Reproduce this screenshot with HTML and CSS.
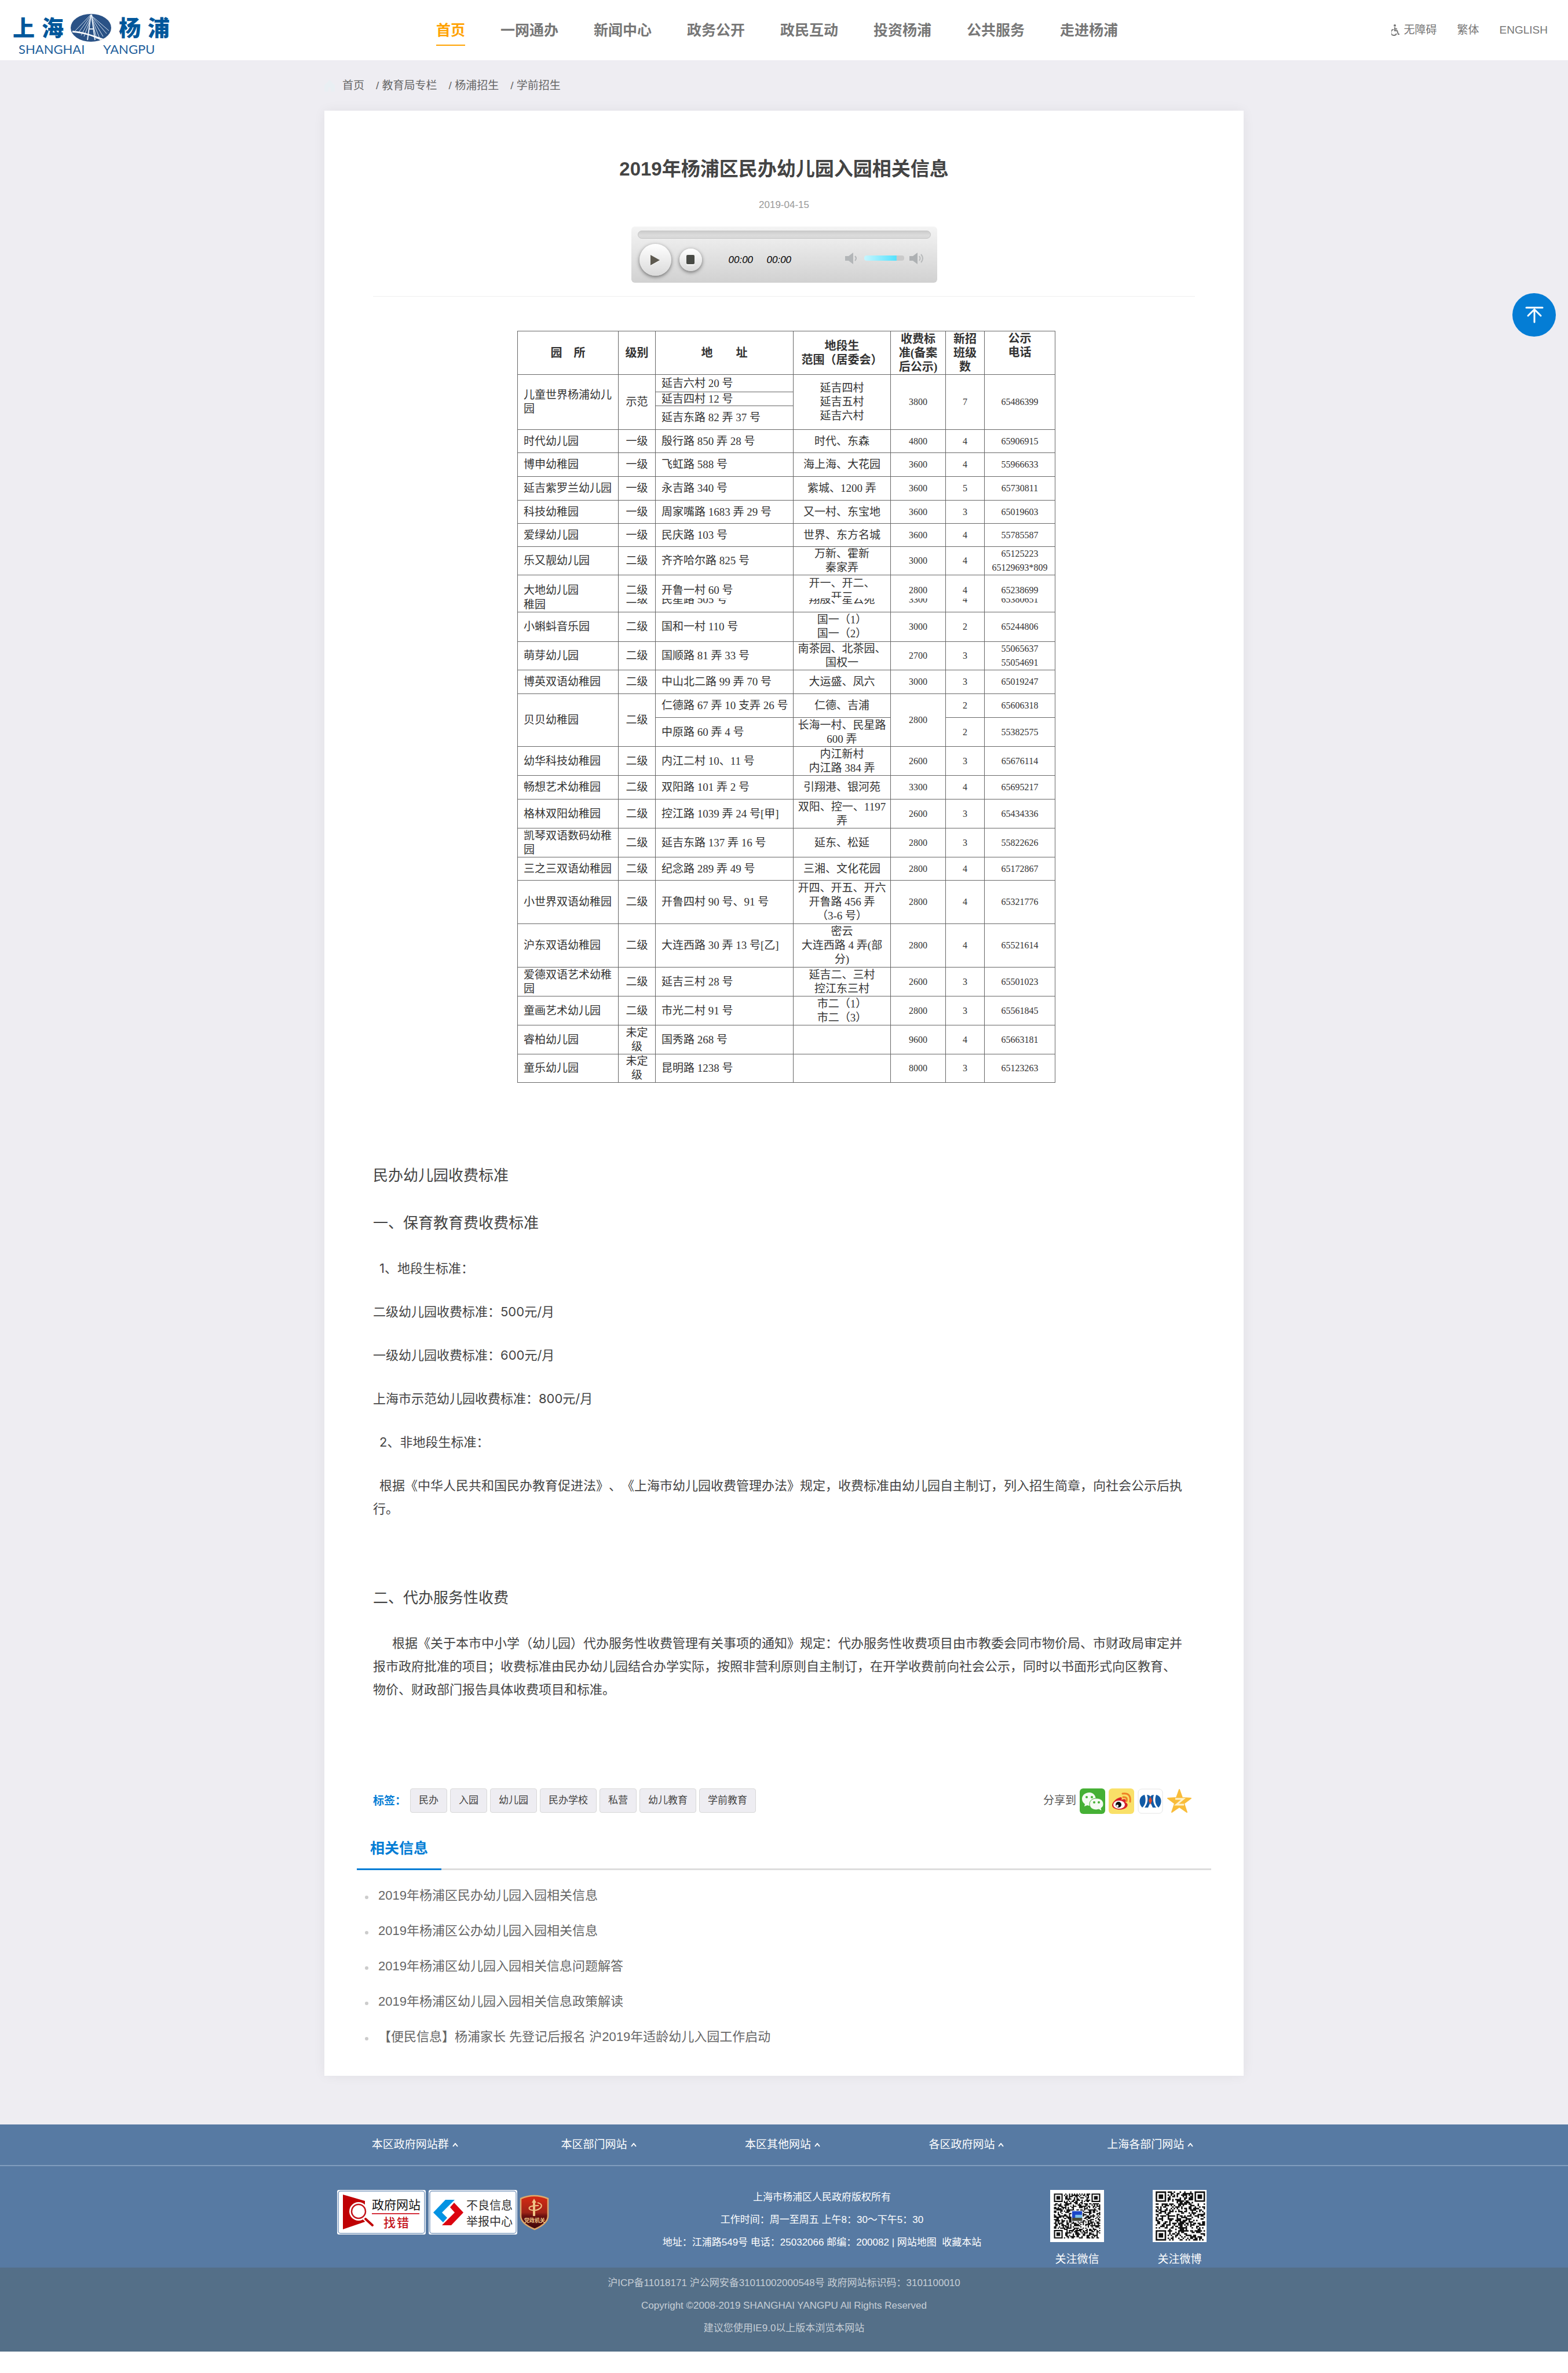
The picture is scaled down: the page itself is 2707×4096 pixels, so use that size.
FILE: index.html
```html
<!DOCTYPE html>
<html lang="zh-CN">
<head>
<meta charset="utf-8">
<meta name="viewport" content="width=device-width, initial-scale=1">
<title>2019年杨浦区民办幼儿园入园相关信息</title>
<link rel="stylesheet" href="styles.css">
</head>
<body>
<header class="site-header">
  <a class="logo" href="#" aria-label="上海杨浦">
    <svg width="276" height="76" viewBox="0 0 276 76">
      <g class="logo-name">
        <text x="0" y="39">上</text><text x="50" y="39">海</text><text x="183" y="39">杨</text><text x="233" y="39">浦</text>
      </g>
      <ellipse cx="135" cy="25" rx="35" ry="24" fill="#2a5286"/>
      <g stroke="#dfe9f4" stroke-width="1" fill="none">
        <path d="M134 3L108 30M134 5L113 34M135 6L118 38M135 8L123 40M137 5L166 30M137 6L162 35M137 8L156 40M137 10L150 43M137 12L145 44"/>
        <path d="M135 2L129 46M136 2L142 46M132 27H140" stroke-width="2"/>
      </g>
      <path d="M103 30C120 31 140 38 157 44L151 46C138 39 120 34 103 33Z" fill="#fff"/>
      <g class="logo-sub"><text x="10" y="70">SHANGHAI</text><text x="156" y="70">YANGPU</text></g>
    </svg>
  </a>
  <nav class="main-nav">
    <a class="active" href="#">首页</a><a href="#">一网通办</a><a href="#">新闻中心</a><a href="#">政务公开</a><a href="#">政民互动</a><a href="#">投资杨浦</a><a href="#">公共服务</a><a href="#">走进杨浦</a>
  </nav>
  <div class="tools">
    <a href="#"><svg width="14" height="20" viewBox="0 0 14 20" fill="none" stroke="#777" stroke-width="2"><circle cx="6" cy="2" r="2" fill="#777" stroke="none"/><path d="M6 5V11H10L12 17H14M6 8H10M4 9A5 5 0 1 0 9 16"/></svg>无障碍</a>
    <a href="#">繁体</a>
    <a href="#">ENGLISH</a>
  </div>
</header>

<main class="page">
  <nav class="crumbs">
    <svg width="18" height="20" viewBox="0 0 18 20" fill="#e9eff3"><path d="M9 0L18 9V20H11V13H7V20H0V9Z"/></svg>
    <a href="#">首页</a><span>/ <a href="#">教育局专栏</a></span><span>/ <a href="#">杨浦招生</a></span><span>/ <a href="#">学前招生</a></span>
  </nav>

  <article class="card">
    <h1>2019年杨浦区民办幼儿园入园相关信息</h1>
    <p class="date">2019-04-15</p>
    <div class="player">
      <input class="seek" type="range" value="0" aria-label="播放进度">
      <div class="controls">
        <button class="play" type="button" aria-label="播放"><svg width="18" height="20" viewBox="0 0 18 20"><path d="M1 2L17 11L1 20Z" fill="#fff"/><path d="M1 1L17 10L1 19Z" fill="#5e5a50"/></svg></button>
        <button class="stop" type="button" aria-label="停止"><svg width="14" height="18" viewBox="0 0 14 18"><rect y="2" width="14" height="16" rx="2" fill="#f8f8f8"/><rect width="14" height="16" rx="2" fill="#484a45"/></svg></button>
        <span class="time">00:00</span><span class="time">00:00</span>
        <div class="volume">
          <svg width="24" height="20" viewBox="0 0 24 20"><path d="M0 6H6L14 0V20L6 14H0Z" fill="#b3b6b8"/><path d="M17 6Q21 10 17 14" fill="none" stroke="#b3b6b8" stroke-width="2"/></svg>
          <input class="level" type="range" value="80" aria-label="音量">
          <svg width="28" height="20" viewBox="0 0 28 20"><path d="M0 6H6L14 0V20L6 14H0Z" fill="#aeb1b3"/><path d="M17 6Q20 10 17 14M20 3Q26 10 20 17" fill="none" stroke="#b8babb" stroke-width="2"/></svg>
        </div>
      </div>
    </div>
    <hr>

    <table class="schools">
      <colgroup><col class="c1"><col class="c2"><col class="c3"><col class="c4"><col class="c5"><col class="c6"><col class="c7"></colgroup>
      <thead>
        <tr class="h75"><th>园&emsp;所</th><th>级别</th><th>地&emsp;&emsp;址</th><th>地段生<br>范围（居委会）</th><th>收费标<br>准(备案<br>后公示)</th><th>新招<br>班级<br>数</th><th class="top">公示<br>电话</th></tr>
      </thead>
      <tbody>
        <tr class="h30"><td rowspan="3">儿童世界杨浦幼儿园</td><td rowspan="3">示范</td><td>延吉六村 20 号</td><td rowspan="3">延吉四村<br>延吉五村<br>延吉六村</td><td rowspan="3">3800</td><td rowspan="3">7</td><td rowspan="3">65486399</td></tr>
        <tr class="h24"><td>延吉四村 12 号</td></tr>
        <tr class="h41"><td>延吉东路 82 弄 37 号</td></tr>
        <tr class="h40"><td>时代幼儿园</td><td>一级</td><td>殷行路 850 弄 28 号</td><td>时代、东森</td><td>4800</td><td>4</td><td>65906915</td></tr>
        <tr class="h41"><td>博申幼稚园</td><td>一级</td><td>飞虹路 588 号</td><td>海上海、大花园</td><td>3600</td><td>4</td><td>55966633</td></tr>
        <tr class="h41"><td>延吉紫罗兰幼儿园</td><td>一级</td><td>永吉路 340 号</td><td>紫城、1200 弄</td><td>3600</td><td>5</td><td>65730811</td></tr>
        <tr class="h40"><td>科技幼稚园</td><td>一级</td><td>周家嘴路 1683 弄 29 号</td><td>又一村、东宝地</td><td>3600</td><td>3</td><td>65019603</td></tr>
        <tr class="h40"><td>爱绿幼儿园</td><td>一级</td><td>民庆路 103 号</td><td>世界、东方名城</td><td>3600</td><td>4</td><td>55785587</td></tr>
        <tr class="h49"><td>乐又靓幼儿园</td><td>二级</td><td>齐齐哈尔路 825 号</td><td>万新、霍新<br>秦家弄</td><td>3000</td><td>4</td><td>65125223<br>65129693*809</td></tr>
        <tr class="h40 cut-above"><td><div>大地幼儿园</div></td><td><div>二级</div></td><td><div>开鲁一村 60 号</div></td><td><div class="two">开一、开二、<br>开三</div></td><td><div>2800</div></td><td><div>4</div></td><td><div>65238699</div></td></tr>
        <tr class="h24 cut-below"><td>稚园</td><td><div>二级</div></td><td><div>民星路 505 号</div></td><td><div>翔殷、星云苑</div></td><td><div>3300</div></td><td><div>4</div></td><td><div>65380651</div></td></tr>
        <tr class="h51"><td>小蝌蚪音乐园</td><td>二级</td><td>国和一村 110 号</td><td>国一（1）<br>国一（2）</td><td>3000</td><td>2</td><td>65244806</td></tr>
        <tr class="h49"><td>萌芽幼儿园</td><td>二级</td><td>国顺路 81 弄 33 号</td><td>南茶园、北茶园、<br>国权一</td><td>2700</td><td>3</td><td>55065637<br>55054691</td></tr>
        <tr class="h41"><td>博英双语幼稚园</td><td>二级</td><td>中山北二路 99 弄 70 号</td><td>大运盛、凤六</td><td>3000</td><td>3</td><td>65019247</td></tr>
        <tr class="h41"><td rowspan="2">贝贝幼稚园</td><td rowspan="2">二级</td><td>仁德路 67 弄 10 支弄 26 号</td><td>仁德、吉浦</td><td rowspan="2">2800</td><td>2</td><td>65606318</td></tr>
        <tr class="h50 branch"><td>中原路 60 弄 4 号</td><td>长海一村、民星路<br>600 弄</td><td>2</td><td>55382575</td></tr>
        <tr class="h50"><td>幼华科技幼稚园</td><td>二级</td><td>内江二村 10、11 号</td><td>内江新村<br>内江路 384 弄</td><td>2600</td><td>3</td><td>65676114</td></tr>
        <tr class="h41"><td>畅想艺术幼稚园</td><td>二级</td><td>双阳路 101 弄 2 号</td><td>引翔港、银河苑</td><td>3300</td><td>4</td><td>65695217</td></tr>
        <tr class="h50"><td>格林双阳幼稚园</td><td>二级</td><td>控江路 1039 弄 24 号[甲]</td><td>双阳、控一、1197<br>弄</td><td>2600</td><td>3</td><td>65434336</td></tr>
        <tr class="h50"><td>凯琴双语数码幼稚园</td><td>二级</td><td>延吉东路 137 弄 16 号</td><td>延东、松延</td><td>2800</td><td>3</td><td>55822626</td></tr>
        <tr class="h40"><td>三之三双语幼稚园</td><td>二级</td><td>纪念路 289 弄 49 号</td><td>三湘、文化花园</td><td>2800</td><td>4</td><td>65172867</td></tr>
        <tr class="h75"><td>小世界双语幼稚园</td><td>二级</td><td>开鲁四村 90 号、91 号</td><td>开四、开五、开六<br>开鲁路 456 弄<br>（3-6 号）</td><td>2800</td><td>4</td><td>65321776</td></tr>
        <tr class="h75"><td>沪东双语幼稚园</td><td>二级</td><td>大连西路 30 弄 13 号[乙]</td><td>密云<br>大连西路 4 弄(部<br>分)</td><td>2800</td><td>4</td><td>65521614</td></tr>
        <tr class="h50"><td>爱德双语艺术幼稚园</td><td>二级</td><td>延吉三村 28 号</td><td>延吉二、三村<br>控江东三村</td><td>2600</td><td>3</td><td>65501023</td></tr>
        <tr class="h50"><td>童画艺术幼儿园</td><td>二级</td><td>市光二村 91 号</td><td>市二（1）<br>市二（3）</td><td>2800</td><td>3</td><td>65561845</td></tr>
        <tr class="h50"><td>睿柏幼儿园</td><td>未定<br>级</td><td>国秀路 268 号</td><td></td><td>9600</td><td>4</td><td>65663181</td></tr>
        <tr class="h49"><td>童乐幼儿园</td><td>未定<br>级</td><td>昆明路 1238 号</td><td></td><td>8000</td><td>3</td><td>65123263</td></tr>
      </tbody>
    </table>

    <div class="text">
      <h2>民办幼儿园收费标准</h2>
      <h2>一、保育教育费收费标准</h2>
      <p class="indent">1、地段生标准：</p>
      <p>二级幼儿园收费标准：500元/月</p>
      <p>一级幼儿园收费标准：600元/月</p>
      <p>上海市示范幼儿园收费标准：800元/月</p>
      <p class="indent">2、非地段生标准：</p>
      <p class="indent">根据《中华人民共和国民办教育促进法》、《上海市幼儿园收费管理办法》规定，收费标准由幼儿园自主制订，列入招生简章，向社会公示后执<br>行。</p>
      <p>&nbsp;</p>
      <h2>二、代办服务性收费</h2>
      <p class="indent-more">根据《关于本市中小学（幼儿园）代办服务性收费管理有关事项的通知》规定：代办服务性收费项目由市教委会同市物价局、市财政局审定并<br>报市政府批准的项目；收费标准由民办幼儿园结合办学实际，按照非营利原则自主制订，在开学收费前向社会公示，同时以书面形式向区教育、<br>物价、财政部门报告具体收费项目和标准。</p>
    </div>

    <div class="meta">
      <div class="tags">
        <strong>标签：</strong>
        <a href="#">民办</a><a href="#">入园</a><a href="#">幼儿园</a><a href="#">民办学校</a><a href="#">私营</a><a href="#">幼儿教育</a><a href="#">学前教育</a>
      </div>
      <div class="share">
        <span>分享到</span>
        <a href="#" aria-label="微信"><svg width="44" height="44" viewBox="0 0 44 44"><rect width="44" height="44" rx="6" fill="#45b035"/><g fill="#f4fbf2"><path d="M17 7C9 7 4 12 4 18C4 22 6 25 9 27L8 31L13 29Q15 30 19 30L28 20C28 12 23 7 17 7Z"/><path d="M29 17C22 17 17 21 17 27C17 33 22 37 29 37L33 36L38 39L37 34C40 32 41 30 41 27C41 21 36 17 29 17Z" stroke="#45b035" stroke-width="1"/></g><g fill="#45b035"><circle cx="12" cy="15" r="2"/><circle cx="21" cy="15" r="2"/><circle cx="25" cy="24" r="2"/><circle cx="33" cy="24" r="2"/></g></svg></a>
        <a href="#" aria-label="新浪微博"><svg width="44" height="44" viewBox="0 0 44 44"><rect width="44" height="44" rx="6" fill="#f9e068"/><path d="M18 16C12 18 5 25 6 30C8 38 27 39 32 31C34 27 31 25 29 24C31 19 28 17 22 20C24 16 22 14 18 16Z" fill="#d8232a"/><ellipse cx="18" cy="28" rx="10" ry="7" fill="#fff"/><circle cx="17" cy="28" r="5" fill="#111"/><circle cx="15" cy="30" r="2" fill="#fff"/><path d="M25 15Q33 14 31 22M24 9Q39 7 37 23" fill="none" stroke="#ef8125" stroke-width="3" stroke-linecap="round"/></svg></a>
        <a href="#" aria-label="人人网"><svg width="44" height="44" viewBox="0 0 44 44"><rect x="1" y="1" width="42" height="42" rx="6" fill="#fff" stroke="#e4e4e4"/><g fill="#125aa5"><path d="M12 11C2 13 1 26 8 33C14 28 15 19 12 11Z"/><path d="M32 11C42 13 43 26 36 33C30 28 29 19 32 11Z"/><path d="M16 11C19 20 16 28 12 33H18L22 24V14Q20 11 16 11Z"/><path d="M28 11C25 20 28 28 32 33H26L22 24V14Q24 11 28 11Z"/></g><path d="M22 14L25 21L22 28L19 21Z" fill="#dd4b2c"/></svg></a>
        <a href="#" aria-label="QQ空间"><svg width="44" height="44" viewBox="0 0 44 44"><path d="M22 2L27 16L42 17L30 26L35 41L22 32L9 41L14 26L2 17L17 16Z" fill="#f9bd3a" stroke="#f9bd3a" stroke-width="2" stroke-linejoin="round"/><path d="M15 18H29L17 28H30" fill="none" stroke="#fff3cd" stroke-width="3"/></svg></a>
      </div>
    </div>

    <section class="related">
      <h3><span>相关信息</span></h3>
      <ul>
        <li><a href="#">2019年杨浦区民办幼儿园入园相关信息</a></li>
        <li><a href="#">2019年杨浦区公办幼儿园入园相关信息</a></li>
        <li><a href="#">2019年杨浦区幼儿园入园相关信息问题解答</a></li>
        <li><a href="#">2019年杨浦区幼儿园入园相关信息政策解读</a></li>
        <li><a href="#">【便民信息】杨浦家长 先登记后报名 沪2019年适龄幼儿入园工作启动</a></li>
      </ul>
    </section>
  </article>
</main>

<footer class="footer">
  <div class="site-links">
    <div class="wrap">
      <a href="#">本区政府网站群<svg width="11" height="7" viewBox="0 0 11 7"><path d="M1 6L5 1L9 6"/></svg></a>
      <a href="#">本区部门网站<svg width="11" height="7" viewBox="0 0 11 7"><path d="M1 6L5 1L9 6"/></svg></a>
      <a href="#">本区其他网站<svg width="11" height="7" viewBox="0 0 11 7"><path d="M1 6L5 1L9 6"/></svg></a>
      <a href="#">各区政府网站<svg width="11" height="7" viewBox="0 0 11 7"><path d="M1 6L5 1L9 6"/></svg></a>
      <a href="#">上海各部门网站<svg width="11" height="7" viewBox="0 0 11 7"><path d="M1 6L5 1L9 6"/></svg></a>
    </div>
  </div>
  <div class="about">
    <div class="badges">
      <a href="#" aria-label="政府网站找错"><svg width="153" height="77" viewBox="0 0 153 77"><rect width="153" height="77" rx="3" fill="#fff"/><rect x="2" y="2" width="149" height="73" rx="4" fill="none" stroke="#7f9cc0" stroke-width="1.500"/><path d="M10 8L48 19V55L10 68Z" fill="#bf0004"/><circle cx="37" cy="37" r="16" fill="#fff"/><circle cx="37" cy="37" r="12" fill="#fff" stroke="#c4131a" stroke-width="2.500"/><path d="M47 48L62 63" stroke="#fff" stroke-width="8"/><path d="M49 50L61 61" stroke="#bf0004" stroke-width="4" stroke-linecap="round"/><text class="b-text" x="60" y="33">政府网站</text><path d="M60 41H142" stroke="#d4303c" stroke-width="2"/><text class="b-text red" x="80" y="64">找</text><text class="b-text red" x="103" y="64">错</text></svg></a>
      <a href="#" aria-label="不良信息举报中心"><svg width="153" height="77" viewBox="0 0 153 77"><rect width="153" height="77" rx="3" fill="#fff"/><rect x="2" y="2" width="149" height="73" rx="4" fill="none" stroke="#7f9cc0" stroke-width="1.500"/><path d="M8 39L29 17H45L23 39L32 48L25 56Z" fill="#0393e3"/><path d="M44 22L60 39L39 61H23L45 39L37 30Z" fill="#dc0410"/><text class="b-text gray" x="65" y="34">不良信息</text><text class="b-text gray" x="65" y="62">举报中心</text></svg></a>
      <a class="shield" href="#" aria-label="党政机关"><svg width="49" height="60" viewBox="0 0 49 60"><defs><linearGradient id="sh" x1="0" y1="0" x2="0" y2="1"><stop offset="0" stop-color="#d72a12"/><stop offset="0.500" stop-color="#9f2417"/><stop offset="0.600" stop-color="#6b1210"/><stop offset="1" stop-color="#3d0708"/></linearGradient></defs><path d="M1 6Q24 -4 48 6V36Q48 49 25 59Q1 49 1 36Z" fill="url(#sh)" stroke="#dfa96b" stroke-width="2.500"/><path d="M22 36V13L20 13L24 6L28 13H26V36Z" fill="#f0c385"/><path d="M30 13Q39 15 36 21Q31 27 21 26Q14 25 16 21Q19 18 32 18" fill="none" stroke="#f0c385" stroke-width="2"/><text class="s-text" x="25" y="47" text-anchor="middle">党政机关</text></svg></a>
    </div>
    <address class="info">
      <p>上海市杨浦区人民政府版权所有</p>
      <p>工作时间：周一至周五 上午8：30～下午5：30</p>
      <p>地址：江浦路549号 电话：25032066 邮编：200082 | <a href="#">网站地图</a>&nbsp; <a href="#">收藏本站</a></p>
    </address>
    <div class="codes">
      <figure>
        <svg class="qr" data-size="37" data-seed="7" width="93" height="90" viewBox="-3 -3 43 43" preserveAspectRatio="none"></svg>
        <figcaption>关注微信</figcaption>
      </figure>
      <figure>
        <svg class="qr" data-size="33" data-seed="23" width="93" height="90" viewBox="-2 -1 36 35" preserveAspectRatio="none"></svg>
        <figcaption>关注微博</figcaption>
      </figure>
    </div>
  </div>
  <div class="legal">
    <p>沪ICP备11018171 沪公网安备31011002000548号 政府网站标识码：3101100010</p>
    <p>Copyright ©2008-2019 SHANGHAI YANGPU All Rights Reserved</p>
    <p>建议您使用IE9.0以上版本浏览本网站</p>
  </div>
</footer>

<button class="to-top" type="button" aria-label="返回顶部"><svg width="32" height="30" viewBox="0 0 32 30"><path d="M2 2H30M16 27V5M5 16L16 5L27 16" fill="none" stroke="#fff" stroke-width="3" stroke-linecap="round" stroke-linejoin="round"/></svg></button>
<script src="codes.js"></script>
</body>
</html>
```
FILE: styles.css
```css
* { box-sizing: border-box; }
body {
  margin: 0;
  background: #fff;
  color: #444;
  font-family: "Liberation Sans", "Noto Sans CJK SC", sans-serif;
  font-size: 19px;
  text-spacing-trim: space-all;
}
a { color: inherit; text-decoration: none; }
h1, h2, h3, p, ul, figure { margin: 0; padding: 0; }
button, input { margin: 0; padding: 0; border: 0; font: inherit; }
svg { display: block; }

/* header */
.site-header { display: flex; height: 104px; background: #fff; color: #777; }
.logo { flex: 0 0 753px; padding: 23px 0 0 22px; }
.logo svg { overflow: visible; }
.logo-name text { font: 900 38px "Noto Sans CJK SC", sans-serif; fill: #00579b; }
.logo-sub text { font: 22px Lato, sans-serif; fill: #1f5f9c; }
.main-nav { display: flex; flex: 1; gap: 61px; align-items: flex-start; padding-top: 23px; font-size: 25px; font-weight: 700; }
.main-nav a { height: 56px; line-height: 58px; white-space: nowrap; }
.main-nav .active { color: #ffa200; border-bottom: 2px solid #ffa200; }
.tools { display: flex; gap: 35px; align-items: center; padding-right: 35px; line-height: 28px; }
.tools a { display: flex; gap: 8px; align-items: center; }

/* page body */
.page { padding-bottom: 84px; background: #eeedf2; }
.crumbs { display: flex; gap: 20px; width: 100%; max-width: 1587px; margin: 0 auto; line-height: 87px; color: #666; }
.crumbs svg { align-self: center; margin-right: -7px; }
.card { width: 100%; max-width: 1587px; margin: 0 auto; padding: 77px 84px 37px; background: #fff; box-shadow: 0 0 20px rgba(0, 0, 0, 0.06); }
.card h1 { font-size: 33px; line-height: 48px; text-align: center; }
.date { margin-top: 26px; color: #999; font-size: 17px; line-height: 24px; text-align: center; }
.card hr { height: 1px; margin: 23px 0 59px; border: 0; background: #eee; }

/* audio player */
.player { width: 528px; height: 97px; margin: 25px auto 0; padding: 7px 11px; border-radius: 6px; background: linear-gradient(#f4f4f4, #d1d1d1); }
.player input { display: block; appearance: none; }
.player input::-webkit-slider-thumb { appearance: none; width: 1px; height: 1px; opacity: 0; }
.seek { width: 100%; height: 14px; border: 1px solid #c4c4c4; border-radius: 7px; background: linear-gradient(#ccc, #dcdcdc 60%, #d8d8d8); }
.controls { display: flex; align-items: center; height: 73px; padding-left: 3px; }
.controls button { display: grid; place-items: center; border-radius: 50%; background: linear-gradient(#fff, #dadada); box-shadow: 0 2px 6px rgba(0, 0, 0, 0.5); }
.play { width: 55px; height: 55px; }
.stop { width: 39px; height: 39px; margin: 0 46px 0 14px; }
.time { width: 66px; color: #000; font-size: 17px; font-style: italic; }
.volume { display: flex; gap: 9px; align-items: center; margin: 0 9px 6px auto; }
.level { width: 69px; height: 9px; border-radius: 4px; background: linear-gradient(90deg, #c6f6ff, #55e2fd 80%, #cacaca 82%); }

/* kindergarten table */
.schools { width: 928px; margin: 0 0 136px 249px; border-collapse: collapse; table-layout: fixed; color: #333; font-family: "Liberation Serif", "Noto Sans CJK SC", serif; font-size: 19px; line-height: 24px; text-align: center; }
.c1 { width: 174px; }
.c2 { width: 64px; }
.c3 { width: 238px; }
.c4 { width: 168px; }
.c5 { width: 95px; }
.c6 { width: 67px; }
.c7 { width: 122px; }
.schools th, .schools td { padding: 0; border: 1px solid #666; white-space: nowrap; }
.schools th { font-size: 20px; font-weight: 700; }
.schools th.top { vertical-align: top; }
.schools td:first-child { padding-left: 10px; text-align: left; white-space: normal; }
.schools td:nth-child(3) { padding-left: 10px; text-align: left; }
.schools td:nth-child(n+5) { font-size: 16px; }
.schools .branch td:nth-child(n+3) { padding: 0; font-size: 16px; text-align: center; }
.schools .h24 { height: 24px; line-height: 22px; }
.schools .h30 { height: 30px; }
.schools .h40 { height: 40px; }
.schools .h41 { height: 41px; }
.schools .h49 { height: 49px; }
.schools .h50 { height: 50px; }
.schools .h51 { height: 51px; }
.schools .h75 { height: 75px; }

/* the two rows that meet at the page seam of the scanned list */
.schools .cut-above td { border-bottom: 0; }
.schools .cut-below td { border-top: 0; }
.cut-above div { height: 39px; overflow: hidden; line-height: 52px; }
.cut-above .two { padding-top: 2px; line-height: 24px; }
.cut-below div { height: 23px; overflow: hidden; line-height: 4px; }

/* article text */
.text { font-family: Inter, "Noto Sans CJK SC", sans-serif; font-size: 22px; line-height: 40px; }
.text h2 { margin-bottom: 35px; font-size: 26px; font-weight: 400; line-height: 47px; }
.text p { margin-bottom: 35px; white-space: nowrap; }
.text p:last-child { margin-bottom: 0; }
.text .indent { text-indent: 11px; }
.text .indent-more { text-indent: 33px; }

/* tags and sharing */
.meta { display: flex; justify-content: space-between; height: 44px; margin-top: 151px; }
.tags { display: flex; gap: 5px; line-height: 40px; }
.tags strong { width: 59px; color: #047dd5; font-size: 19px; line-height: 44px; white-space: nowrap; }
.tags a { height: 42px; padding: 0 14px; border: 1px solid #d8d8d8; border-radius: 4px; background: #eeedf2; font-size: 17px; }
.share { display: flex; gap: 6px; padding-right: 5px; line-height: 42px; color: #555; }

/* related list */
.related { margin: 24px -28px 0; }
.related h3 { border-bottom: 3px solid #ddd; color: #047dd5; font-size: 25px; line-height: 70px; }
.related h3 span { display: inline-block; height: 73px; margin-bottom: -3px; padding: 0 23px; border-bottom: 3px solid #047dd5; vertical-align: top; }
.related ul { margin-top: 13px; list-style: none; color: #666; font-size: 22px; line-height: 61px; }
.related li { display: flex; gap: 17px; align-items: center; padding-left: 14px; }
.related li::before { width: 6px; height: 6px; margin-top: 7px; border-radius: 50%; background: #ccc; content: ""; }

/* footer */
.footer { background: #577aa3; color: #fff; }
.site-links { border-bottom: 2px solid #819dbd; line-height: 70px; }
.wrap { display: grid; grid-template-columns: repeat(5, 1fr); width: 100%; max-width: 1587px; margin: 0 auto; }
.wrap a { display: flex; gap: 6px; justify-content: center; align-items: center; padding-right: 4px; }
.wrap svg { fill: none; stroke: #fff; stroke-width: 2; }
.about { display: flex; width: 100%; max-width: 1587px; margin: 0 auto; padding: 34px 64px 0 22px; }
.badges { display: flex; gap: 5px; padding-top: 7px; }
.shield { padding-top: 9px; }
.badges svg { overflow: visible; }
.b-text { font: 21px "Noto Sans CJK SC", sans-serif; fill: #111; }
.b-text.red { fill: #c4131a; font-weight: 500; }
.b-text.gray { font-size: 20px; fill: #333; }
.s-text { font: 700 9px "Noto Sans CJK SC", sans-serif; fill: #f0c385; }
.info { flex: 1; padding-left: 78px; font-size: 17px; font-style: normal; line-height: 39px; text-align: center; }
.codes { display: flex; gap: 84px; padding-top: 7px; }
.codes figcaption { margin-top: 15px; line-height: 29px; text-align: center; }
.qr { background: #fff; }
.legal { padding: 7px 0 21px; background: #546f88; color: #c6ced6; font-size: 17px; line-height: 39px; text-align: center; }

.to-top { position: absolute; top: 506px; right: 21px; display: grid; place-items: center; width: 75px; height: 75px; border-radius: 50%; background: #047dd5; }
```
FILE: codes.js
```js
// Fills each .qr element with a grid of modules and its three finder marks.
document.querySelectorAll('.qr').forEach(function (svg) {
  var n = Number(svg.dataset.size);
  var seed = Number(svg.dataset.seed);
  var d = '';
  function next() {
    seed = (seed * 48271) % 2147483647;
    return seed / 2147483647;
  }
  function finder(x, y) {
    return 'M' + x + ' ' + y + 'h7v7h-7zM' + (x + 1) + ' ' + (y + 1) + 'v5h5v-5zM' + (x + 2) + ' ' + (y + 2) + 'h3v3h-3z';
  }
  for (var y = 0; y < n; y++) {
    for (var x = 0; x < n; x++) {
      var dark = next() < 0.5;
      var inFinder = (y < 8 && (x < 8 || x > n - 9)) || (y > n - 9 && x < 8);
      if (dark && !inFinder) d += 'M' + x + ' ' + y + 'h1v1h-1z';
    }
  }
  d += finder(0, 0) + finder(n - 7, 0) + finder(0, n - 7);
  var html = '<path d="' + d + '" fill="#111"/>';
  if (n === 37) {
    html += '<rect x="14" y="14" width="9" height="9" fill="#fff"/><rect x="14.500" y="14.500" width="8" height="8" fill="#1c46c8"/><rect x="17" y="17.500" width="5.500" height="2.500" fill="#7cc0e8"/><rect x="14.500" y="20" width="8" height="2.500" fill="#4b4a35"/>';
  }
  svg.innerHTML = html;
});
```
